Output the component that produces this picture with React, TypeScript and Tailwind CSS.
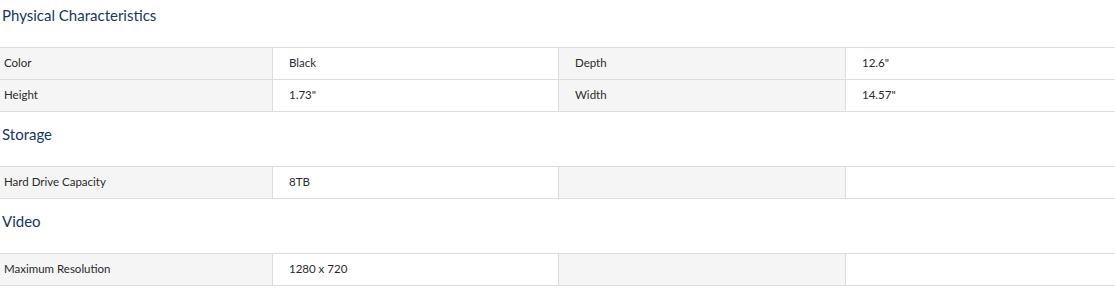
type Row = [string, string, string?, string?];

const SECTIONS: { title: string; rows: Row[] }[] = [
  {
    title: "Physical Characteristics",
    rows: [
      ["Color", "Black", "Depth", '12.6"'],
      ["Height", '1.73"', "Width", '14.57"'],
    ],
  },
  { title: "Storage", rows: [["Hard Drive Capacity", "8TB"]] },
  { title: "Video", rows: [["Maximum Resolution", "1280 x 720"]] },
];

function SpecTable({ rows }: { rows: Row[] }) {
  return (
    <div className="grid grid-cols-[273px_286px_287px_1fr] border-t border-[#dddddd]">
      {rows.map((row, i) => (
        <div key={i} className="contents">
          <div className="h-8 flex items-center pl-1 pb-0.5 bg-[#f5f5f5] border-b border-r border-[#dddddd]">
            {row[0]}
          </div>
          <div className="h-8 flex items-center pl-4 pb-0.5 bg-white border-b border-r border-[#dddddd]">
            {row[1]}
          </div>
          <div className="h-8 flex items-center pl-4 pb-0.5 bg-[#f5f5f5] border-b border-r border-[#dddddd]">
            {row[2] ?? ""}
          </div>
          <div className="h-8 flex items-center pl-4 pb-0.5 bg-white border-b border-[#dddddd]">
            {row[3] ?? ""}
          </div>
        </div>
      ))}
    </div>
  );
}

export default function App() {
  return (
    <div
      className="w-[1115px] bg-white text-[11.5px] text-[#2b2b2b]"
      style={{ fontFamily: "Lato, 'Noto Sans', sans-serif" }}
    >
      {SECTIONS.map((s, i) => (
        <section key={s.title}>
          <h2
            className={
              "pl-0.5 text-[15px] leading-[30px] text-[#15385f] " +
              (i > 0 ? "pt-[7px] h-[54px]" : "h-[47px]")
            }
          >
            {s.title}
          </h2>
          <SpecTable rows={s.rows} />
        </section>
      ))}
    </div>
  );
}
